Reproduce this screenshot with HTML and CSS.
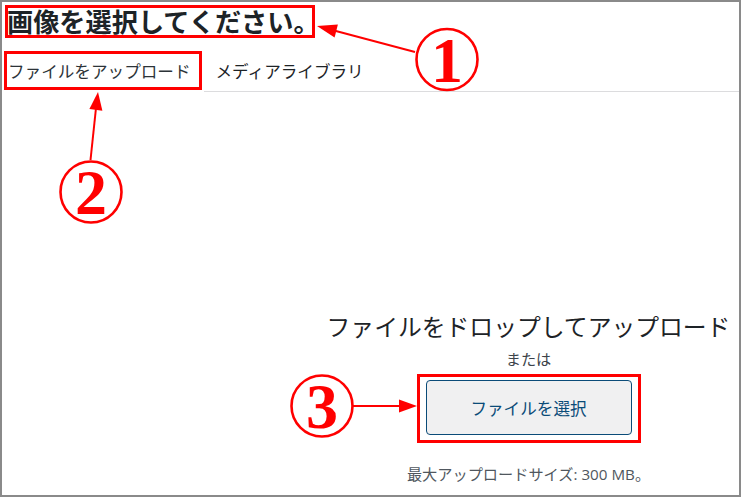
FILE: index.html
```html
<!DOCTYPE html>
<html lang="ja">
<head>
<meta charset="utf-8">
<title>画像を選択してください。</title>
<link rel="stylesheet" href="styles.css">
</head>
<body>
<div class="frame">
  <header class="title-bar">
    <h1 class="title">画像を選択してください。</h1>
  </header>
  <nav class="tabs">
    <a class="tab tab-active">ファイルをアップロード</a>
    <a class="tab">メディアライブラリ</a>
  </nav>
  <main class="uploader">
    <h2 class="drop-text">ファイルをドロップしてアップロード</h2>
    <p class="or-text">または</p>
    <button class="select-btn" type="button">ファイルを選択</button>
    <p class="max-size">最大アップロードサイズ: 300 MB。</p>
  </main>

  <svg class="annotations" width="742" height="497" viewBox="0 0 742 497" aria-hidden="true">
    <rect class="mark-box" x="6.5" y="6.5" width="307" height="30"/>
    <rect class="mark-box" x="5.5" y="52.5" width="195" height="36"/>
    <rect class="mark-box" x="418.5" y="375.5" width="221" height="66"/>

    <line class="mark-line" x1="415" y1="52" x2="334" y2="30.5"/>
    <polygon class="mark-head" points="317,26 337.9,24.6 334.6,37.6"/>

    <line class="mark-line" x1="90.5" y1="160" x2="96" y2="108"/>
    <polygon class="mark-head" points="98,92 102.4,110.7 89.4,109.1"/>

    <line class="mark-line" x1="353" y1="406" x2="401" y2="406"/>
    <polygon class="mark-head" points="417,406 399,399.5 399,412.5"/>

    <circle class="mark-circle" cx="447" cy="59.5" r="30.5"/>
    <text class="mark-num" x="447" y="82">1</text>

    <circle class="mark-circle" cx="91" cy="192" r="30.5"/>
    <text class="mark-num" x="91" y="214">2</text>

    <circle class="mark-circle" cx="322" cy="406" r="30.5"/>
    <text class="mark-num" x="322" y="428">3</text>
  </svg>
</div>
</body>
</html>
```

FILE: styles.css
```css
html, body {
  margin: 0;
  padding: 0;
  background: #ffffff;
}

body {
  font-family: "Noto Sans CJK JP", "Noto Sans", sans-serif;
  color: #1d2327;
}

.frame {
  position: relative;
  box-sizing: border-box;
  width: 741px;
  height: 497px;
  border: 2px solid #8a8a8a;
  display: flex;
  flex-direction: column;
  overflow: hidden;
  background: #ffffff;
}

.title-bar {
  padding: 4px 0 0 5px;
}

.title {
  margin: 0;
  font-size: 26.2px;
  line-height: 30px;
  font-weight: 700;
  color: #1d2327;
  white-space: nowrap;
}

.tabs {
  margin-top: 15px;
  display: flex;
  align-items: flex-start;
  border-bottom: 1px solid #dcdcde;
  height: 40px;
}

.tab {
  display: block;
  height: 40px;
  line-height: 40px;
  font-size: 16.6px;
  padding: 0 12px;
  color: #1d2327;
  white-space: nowrap;
  text-decoration: none;
}

.tab-active {
  height: 41px;
  padding-left: 6px;
  padding-right: 13px;
  background: #ffffff;
  color: #2c3338;
}

.uploader {
  flex: 1;
  display: flex;
  flex-direction: column;
  align-items: center;
  padding-left: 316px;
  padding-top: 217px;
}

.drop-text {
  margin: 0;
  font-size: 23.8px;
  line-height: 33px;
  font-weight: 400;
  color: #1d2327;
  white-space: nowrap;
}

.or-text {
  margin: 6px 0 0;
  font-size: 15.2px;
  line-height: 21px;
  color: #3c434a;
}

.select-btn {
  margin-top: 11px;
  box-sizing: border-box;
  width: 206px;
  height: 55px;
  border: 1px solid #0a4b78;
  border-radius: 4px;
  background: #f0f0f1;
  color: #0a4b78;
  font-family: "Noto Sans CJK JP", "Noto Sans", sans-serif;
  font-size: 16.6px;
  padding: 0;
}

.max-size {
  margin: 29px 0 0;
  font-family: "Open Sans", "Noto Sans CJK JP", sans-serif;
  font-size: 15.2px;
  line-height: 21px;
  color: #50575e;
  white-space: nowrap;
}

.annotations {
  position: absolute;
  left: -2px;
  top: -2px;
  pointer-events: none;
}

.mark-box {
  fill: none;
  stroke: #ff0000;
  stroke-width: 3;
}

.mark-line {
  stroke: #ff0000;
  stroke-width: 2;
}

.mark-head {
  fill: #ff0000;
}

.mark-circle {
  fill: #ffffff;
  stroke: #ff0000;
  stroke-width: 2.6;
}

.mark-num {
  font-family: "Liberation Serif", "DejaVu Serif", serif;
  font-weight: 700;
  font-size: 64px;
  fill: #ff0000;
  text-anchor: middle;
}
```
